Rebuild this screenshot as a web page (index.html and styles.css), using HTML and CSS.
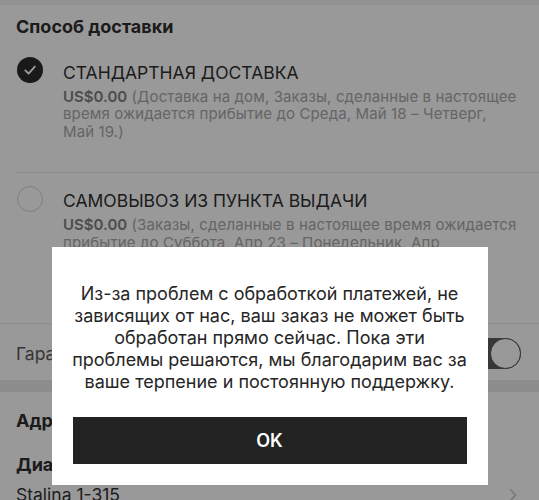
FILE: index.html
```html
<!DOCTYPE html>
<html lang="ru">
  <head>
    <meta charset="UTF-8" />
    <meta name="viewport" content="width=device-width, initial-scale=1.0" />
    <title>Оформление заказа</title>
    <link rel="stylesheet" href="styles.css">
  </head>
  <body>
    <div class="top-band"></div>

    <section class="delivery">
      <h2 class="section-title">Способ доставки</h2>

      <div class="option">
        <span class="radio checked">
          <svg viewBox="0 0 26 26" width="26" height="26">
            <path d="M8.3 13.4 L11.6 16.6 L17.8 9.6" fill="none" stroke="#fff" stroke-width="1.9" stroke-linecap="round" stroke-linejoin="round" />
          </svg>
        </span>
        <div class="option-body">
          <div class="option-name">СТАНДАРТНАЯ ДОСТАВКА</div>
          <p class="option-desc">
            <b>US$0.00</b> (Доставка на дом, Заказы, сделанные в настоящее<br />
            время ожидается прибытие до Среда, Май 18 – Четверг,<br />
            Май 19.)
          </p>
        </div>
      </div>

      <div class="option">
        <span class="radio"></span>
        <div class="option-body">
          <div class="option-name">САМОВЫВОЗ ИЗ ПУНКТА ВЫДАЧИ</div>
          <p class="option-desc">
            <b>US$0.00</b> (Заказы, сделанные в настоящее время ожидается<br />
            прибытие до Суббота, Апр 23 – Понедельник, Апр<br />
            25.)
          </p>
        </div>
      </div>
    </section>

    <div class="guarantee">
      <span class="guarantee-label">Гарантия доставки</span>
      <span class="switch on"><span class="knob"></span></span>
    </div>

    <div class="gap-band"></div>

    <section class="address">
      <h2 class="section-title">Адрес доставки</h2>
      <div class="address-name">Диана Петрова</div>
      <div class="address-line">
        <span>Stalina 1-315</span>
        <svg class="chevron" viewBox="0 0 8 14" width="8" height="14">
          <path d="M1.5 1.5 L6.5 7 L1.5 12.5" fill="none" stroke="#c7c7cc" stroke-width="1.6" stroke-linecap="round" stroke-linejoin="round" />
        </svg>
      </div>
    </section>

    <!-- Alert -->
    <div class="overlay">
      <div class="alert">
        <p class="alert-text">
          Из-за проблем с обработкой платежей, не зависящих от нас, ваш
          заказ не может быть обработан прямо сейчас. Пока эти проблемы
          решаются, мы благодарим вас за ваше терпение и постоянную
          поддержку.
        </p>
        <button class="alert-button">OK</button>
      </div>
    </div>
  </body>
</html>
```

FILE: styles.css
```css
* {
  box-sizing: border-box;
  margin: 0;
  padding: 0;
}

body {
  font-family: Inter, "Liberation Sans", sans-serif;
  width: 539px;
  height: 500px;
  overflow: hidden;
  background: #fff;
  color: #333;
}

.top-band {
  height: 5px;
  background: #f5f5f5;
}

.section-title {
  font-size: 18px;
  font-weight: 700;
  line-height: 24px;
  color: #2e2e2e;
}

/* Delivery options */
.delivery {
  padding: 10px 0 0 16px;
}

.delivery .section-title {
  margin-bottom: 5.5px;
}

.option {
  display: flex;
  align-items: flex-start;
  padding: 16px 16px 32px 1px;
}

.option + .option {
  border-top: 1px solid #ececec;
  padding-bottom: 54px;
}

.radio {
  flex: none;
  width: 26px;
  height: 26px;
  margin-top: -3.5px;
  margin-right: 20px;
  border-radius: 50%;
  border: 1.5px solid #d2d2d2;
}

.radio.checked {
  background: #2a2a2a;
  border: none;
}

.radio svg {
  display: block;
}

.option-name {
  font-size: 17.5px;
  line-height: 24px;
  color: #303030;
}

.option-desc {
  margin-top: 3px;
  font-size: 15px;
  line-height: 17.5px;
  letter-spacing: 0.12px;
  color: #a8a8a8;
  white-space: nowrap;
}

.option-desc b {
  font-weight: 600;
  letter-spacing: 0;
  color: #808080;
}

/* Guarantee toggle row */
.guarantee {
  height: 57px;
  display: flex;
  align-items: center;
  justify-content: space-between;
  padding: 4px 18px 0 16px;
  border-top: 1px solid #ececec;
}

.guarantee-label {
  font-size: 17.5px;
  color: #5a5a5a;
}

.switch {
  position: relative;
  width: 51px;
  height: 31px;
  border-radius: 16px;
  background: #e5e5e5;
}

.switch.on {
  background: #5c5c5c;
}

.switch .knob {
  position: absolute;
  top: 0;
  left: 0;
  width: 31px;
  height: 31px;
  border-radius: 50%;
  background: #fff;
  border: 1.5px solid #5c5c5c;
}

.switch.on .knob {
  left: 20px;
}

.gap-band {
  height: 12px;
  background: #ebebeb;
}

/* Address */
.address {
  padding: 17px 22px 0 16px;
}

.address-name {
  margin-top: 20px;
  font-size: 18px;
  font-weight: 700;
  line-height: 24px;
  color: #2e2e2e;
}

.address-line {
  display: flex;
  align-items: center;
  justify-content: space-between;
  margin-top: 6.5px;
  font-size: 17.5px;
  line-height: 24px;
  color: #333;
}

/* Alert */
.overlay {
  position: fixed;
  top: 0;
  left: 0;
  right: 0;
  bottom: 0;
  background: rgba(0, 0, 0, 0.4);
  display: flex;
  justify-content: center;
  align-items: flex-start;
  padding-top: 247px;
}

.alert {
  width: 436px;
  background: #fff;
  padding: 35.5px 21px 21px;
}

.alert-text {
  margin: 0 -6px;
  font-size: 18px;
  line-height: 22px;
  text-align: center;
  color: #262626;
}

.alert-button {
  display: block;
  width: 100%;
  height: 47px;
  margin-top: 24.5px;
  border: none;
  background: #232323;
  color: #fff;
  font-family: Inter, "Liberation Sans", sans-serif;
  font-size: 18px;
  font-weight: 600;
}
```
